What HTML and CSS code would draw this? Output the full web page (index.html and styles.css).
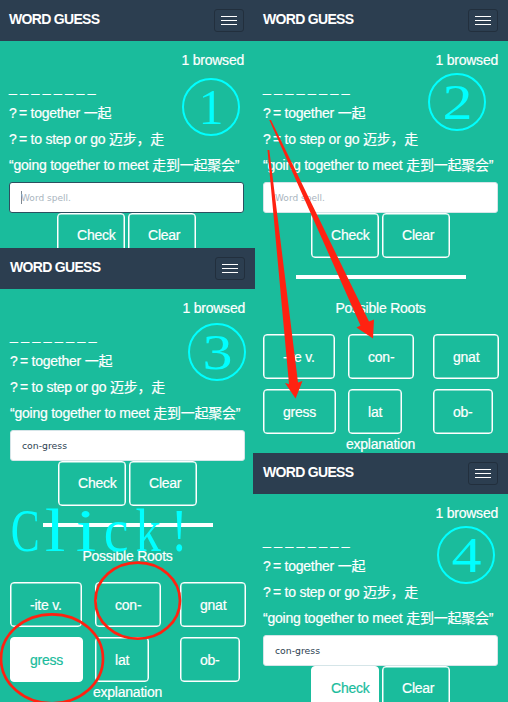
FILE: index.html
```
<!DOCTYPE html>
<html lang="en">
<head>
<meta charset="utf-8">
<title>Word Guess</title>
<link rel="stylesheet" href="styles.css">
</head>
<body>
<main class="board">
  <div class="column">
    <section class="panel panel-one">
      <header class="nav"><b class="brand">WORD GUESS</b><span class="toggle"><i></i><i></i><i></i></span></header>
      <div class="content">
        <div class="browsed">1 browsed</div>
        <div class="blanks">_ _ _ _ _ _ _ _</div>
        <p class="clue"><span class="eq">? = </span>together 一起</p>
        <p class="clue"><span class="eq">? = </span>to step or go 迈步，走</p>
        <p class="clue">“going together to meet 走到一起聚会”</p>
        <div class="field focus"><span class="caret"></span>Word spell.</div>
        <div class="actions"><div class="btn action">Check</div><div class="btn action">Clear</div></div>
      </div>
      <div class="step step-one"><span>1</span></div>
    </section>
    <section class="panel panel-three">
      <header class="nav"><b class="brand">WORD GUESS</b><span class="toggle"><i></i><i></i><i></i></span></header>
      <div class="content">
        <div class="browsed">1 browsed</div>
        <div class="blanks">_ _ _ _ _ _ _ _</div>
        <p class="clue"><span class="eq">? = </span>together 一起</p>
        <p class="clue"><span class="eq">? = </span>to step or go 迈步，走</p>
        <p class="clue">“going together to meet 走到一起聚会”</p>
        <div class="field filled">con-gress</div>
        <div class="actions"><div class="btn action">Check</div><div class="btn action">Clear</div></div>
        <div class="rule"></div>
        <div class="heading">Possible Roots</div>
        <div class="roots">
          <div class="btn">-ite v.</div><div class="btn">con-</div><div class="btn">gnat</div>
          <div class="btn on">gress</div><div class="btn">lat</div><div class="btn">ob-</div>
        </div>
        <div class="explanation">explanation</div>
      </div>
      <div class="step step-three"><span>3</span></div>
      <div class="click"><span class="c-cap">C</span><span class="c-thin">l</span><span class="c-thin">i</span><span class="c-low">c</span><span class="c-k">k</span><span class="c-bang">!</span></div>
    </section>
  </div>
  <div class="column">
    <section class="panel panel-two">
      <header class="nav"><b class="brand">WORD GUESS</b><span class="toggle"><i></i><i></i><i></i></span></header>
      <div class="content">
        <div class="browsed">1 browsed</div>
        <div class="blanks">_ _ _ _ _ _ _ _</div>
        <p class="clue"><span class="eq">? = </span>together 一起</p>
        <p class="clue"><span class="eq">? = </span>to step or go 迈步，走</p>
        <p class="clue">“going together to meet 走到一起聚会”</p>
        <div class="field">Word spell.</div>
        <div class="actions"><div class="btn action">Check</div><div class="btn action">Clear</div></div>
        <div class="rule"></div>
        <div class="heading">Possible Roots</div>
        <div class="roots">
          <div class="btn">-ite v.</div><div class="btn">con-</div><div class="btn">gnat</div>
          <div class="btn">gress</div><div class="btn">lat</div><div class="btn">ob-</div>
        </div>
        <div class="explanation">explanation</div>
      </div>
      <div class="step step-two"><span>2</span></div>
    </section>
    <section class="panel panel-four">
      <header class="nav"><b class="brand">WORD GUESS</b><span class="toggle"><i></i><i></i><i></i></span></header>
      <div class="content">
        <div class="browsed">1 browsed</div>
        <div class="blanks">_ _ _ _ _ _ _ _</div>
        <p class="clue"><span class="eq">? = </span>together 一起</p>
        <p class="clue"><span class="eq">? = </span>to step or go 迈步，走</p>
        <p class="clue">“going together to meet 走到一起聚会”</p>
        <div class="field filled">con-gress</div>
        <div class="actions"><div class="btn action on">Check</div><div class="btn action">Clear</div></div>
      </div>
      <div class="step step-four"><span>4</span></div>
    </section>
  </div>
  <svg class="marks" viewBox="0 0 508 702" aria-hidden="true">
    <path class="arrow" d="M269.3 120 L271 120 L369 321.5 L374 319.5 L373 338.5 L356.5 327.5 L360.5 325.5 Z"/>
    <path class="arrow" d="M267.5 150 L269.3 150 L298 382.5 L302.5 381 L295.6 398.5 L285 383 L289 384 Z"/>
    <ellipse class="ring" cx="137.7" cy="600.7" rx="42.3" ry="38"/>
    <ellipse class="ring" cx="52" cy="658.8" rx="51" ry="44.5"/>
  </svg>
</main>
</body>
</html>
```
FILE: styles.css
```
* { box-sizing: border-box; }
body {
  margin: 0;
  font: 14px/26px "Liberation Sans", "Noto Sans CJK SC", sans-serif;
  letter-spacing: -0.23px;
  -webkit-text-stroke: 0.2px currentColor;
  color: #fff;
  background: #1abc9c;
}
.board { position: relative; display: flex; width: 508px; height: 702px; overflow: hidden; }
.column { width: 254px; flex: none; }
.panel { position: relative; --left: 9px; --right: 10px; }
.panel-one { height: 248px; overflow: hidden; }
.panel-three { height: 454px; width: 255px; z-index: 1; --left: 10px; }
.panel-two { height: 453px; }
.panel-four { height: 249px; width: 255px; margin-left: -1px; overflow: hidden; z-index: 2; --left: 10px; }
.nav {
  height: 41px;
  padding: 0 var(--right) 2px var(--left);
  display: flex;
  align-items: center;
  justify-content: space-between;
  background: #2c3e50;
}
.brand { margin-bottom: 2px; font-size: 14px; letter-spacing: -0.68px; -webkit-text-stroke: 0; }
.toggle {
  width: 30px;
  height: 23px;
  margin-top: 2px;
  display: flex;
  flex-direction: column;
  align-items: center;
  justify-content: center;
  gap: 3px;
  border: 1px solid #222f3d;
  border-radius: 3px;
}
.toggle i { width: 16px; height: 1.3px; background: #fff; }
.content { padding: 6px var(--right) 0 var(--left); }
.browsed { text-align: right; }
.blanks { height: 27px; line-height: 29px; white-space: nowrap; letter-spacing: -0.21px; }
.clue { margin: 0; height: 26px; white-space: nowrap; }
.eq { display: inline-block; width: 21.5px; white-space: pre; word-spacing: -1.2px; }
.field {
  width: 235px;
  height: 31px;
  margin-top: 4px;
  padding-left: 11px;
  display: flex;
  align-items: center;
  background: #fff;
  border: 1px solid #d5e5e8;
  border-radius: 3px;
  font: 9px "DejaVu Sans", sans-serif;
  letter-spacing: 0;
  -webkit-text-stroke: 0;
  color: #a9b4be;
}
.field.focus { border: 1.5px solid #2c5060; }
.field.filled { color: #2c3e50; font-size: 9.3px; }
.caret { width: 1px; height: 13px; margin-right: -1px; background: #7e8994; }
.actions { display: flex; gap: 3px; padding-left: 48px; }
.btn {
  height: 45px;
  padding: 0 19px;
  line-height: 43px;
  border: 1px solid #fff;
  box-shadow: inset 0 0 0 0.5px #fff;
  border-radius: 4px;
  justify-self: start;
  white-space: nowrap;
}
.action { width: 68px; }
.on { background: #fff; color: #1abc9c; }
.rule { width: 170px; height: 4px; margin: 16.5px 0 0 33px; background: #fff; }
.heading { margin-top: 16.5px; width: 235px; text-align: center; }
.roots { display: grid; grid-template-columns: 85px 85px 66px; row-gap: 10px; margin-top: 13px; }
.roots .btn { line-height: 44px; }
.explanation { width: 235px; line-height: 20px; text-align: center; }
.step {
  position: absolute;
  width: 58px;
  height: 58px;
  border: 2px solid #0ff;
  border-radius: 50%;
  display: flex;
  align-items: center;
  justify-content: center;
  color: #0ff;
  font: 50px/54px "Liberation Serif", serif;
  letter-spacing: 0;
  -webkit-text-stroke: 0;
}
.step span { transform: scaleX(1.2); }
.step-one span { transform: scaleX(1); }
.step-one { left: 182px; top: 78px; }
.step-two { left: 174px; top: 73px; }
.step-three { left: 188px; top: 75px; }
.step-four { left: 184px; top: 73px; }
.click {
  position: absolute;
  left: 10px;
  top: 252px;
  display: flex;
  color: #0ff;
  font: 62px/60px "Liberation Serif", serif;
  letter-spacing: 0;
  -webkit-text-stroke: 0;
}
.click span { width: 30.4px; display: flex; justify-content: center; }
.c-cap { transform: scaleX(0.7); }
.c-thin { transform: scaleX(1.2); }
.c-low { transform: scaleX(0.9); }
.c-k { transform: translateX(1px) scaleX(0.82); }
.c-bang { transform: translateX(2px) scaleX(0.8); }
.marks { position: absolute; left: 0; top: 0; width: 508px; height: 702px; z-index: 5; }
.arrow { fill: #ff2211; }
.ring { fill: none; stroke: #ff2211; stroke-width: 2.7; }
```
